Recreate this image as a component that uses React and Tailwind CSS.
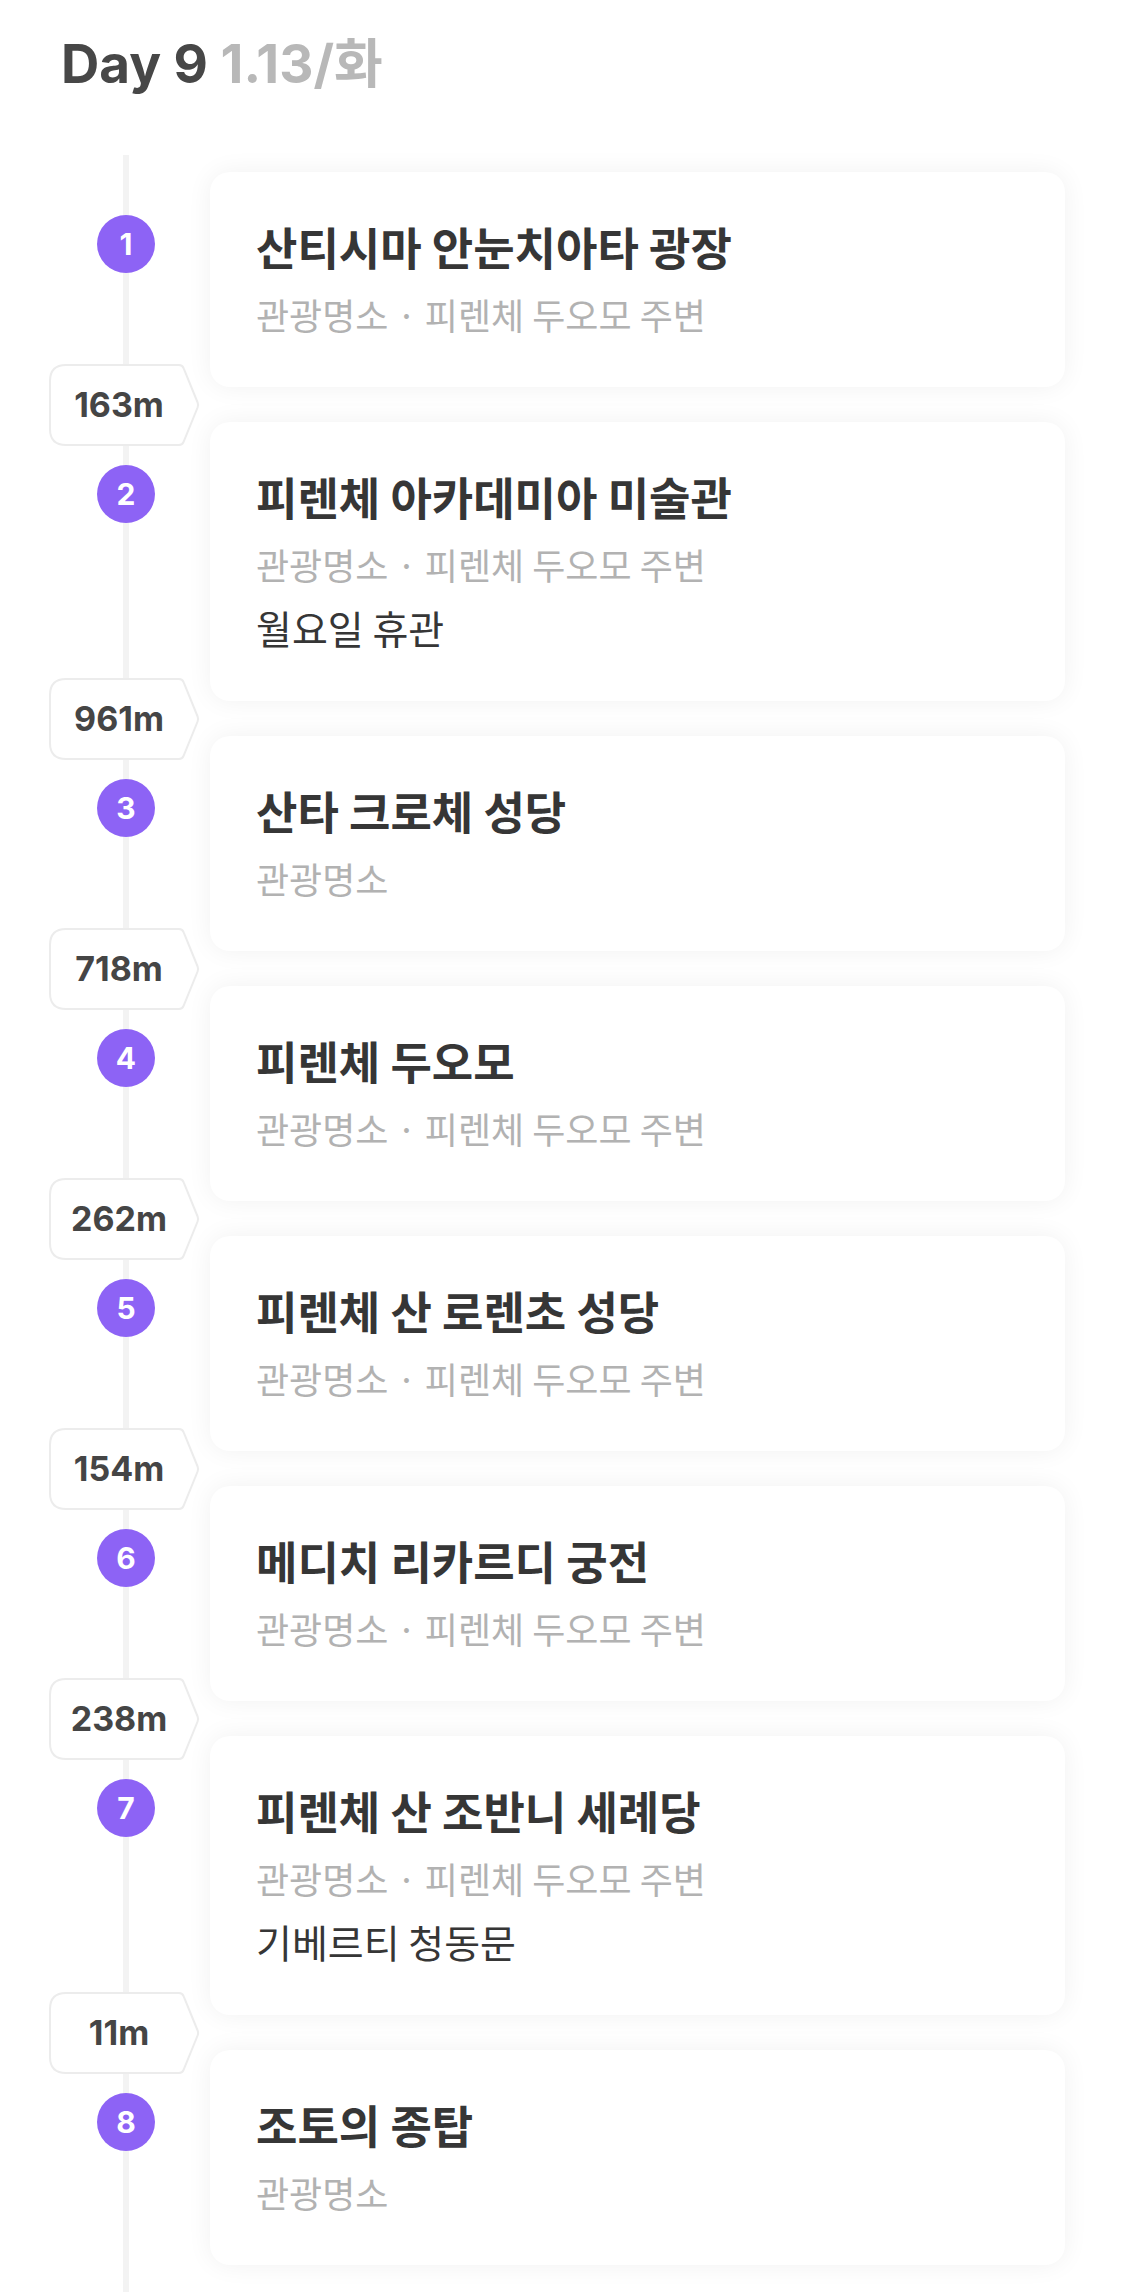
import React from "react";

const NEAR = "관광명소 · 피렌체 두오모 주변";

const stops = [
  { name: "산티시마 안눈치아타 광장", sub: NEAR, dist: "163m" },
  { name: "피렌체 아카데미아 미술관", sub: NEAR, note: "월요일 휴관", dist: "961m" },
  { name: "산타 크로체 성당", sub: "관광명소", dist: "718m" },
  { name: "피렌체 두오모", sub: NEAR, dist: "262m" },
  { name: "피렌체 산 로렌초 성당", sub: NEAR, dist: "154m" },
  { name: "메디치 리카르디 궁전", sub: NEAR, dist: "238m" },
  { name: "피렌체 산 조반니 세례당", sub: NEAR, note: "기베르티 청동문", dist: "11m" },
  { name: "조토의 종탑", sub: "관광명소" },
];

const latin = { fontFamily: 'Inter, "Noto Sans CJK KR", sans-serif' };
const kr = { fontFamily: '"Noto Sans CJK KR", Inter, sans-serif' };

function DistanceBadge({ value }) {
  return (
    <div className="relative z-10 ml-[49px] h-[82px] w-[151px] shrink-0">
      <svg className="absolute inset-0" width="151" height="82" viewBox="0 0 151 82">
        <path
          d="M17 1 H130 Q133.5 1 134.7 4.3 L148.6 38.5 Q149.6 41 148.6 43.5 L134.7 77.7 Q133.5 81 130 81 H17 Q1 81 1 65 V17 Q1 1 17 1 Z"
          fill="#ffffff"
          stroke="#ececec"
          strokeWidth="2"
        />
      </svg>
      <div
        className="relative flex h-full items-center justify-center pr-[11px] text-[34px] font-bold text-[#454545]"
        style={latin}
      >
        {value}
      </div>
    </div>
  );
}

function StopRow({ index, stop }) {
  return (
    <div className="flex">
      <div className="w-[210px] shrink-0 pl-[97px]">
        <div
          className="relative z-10 mt-[43px] flex h-[58px] w-[58px] items-center justify-center rounded-full bg-[#8d63f5] text-[30px] font-bold text-white"
          style={latin}
        >
          {index}
        </div>
      </div>
      <div className="mr-[60px] flex-1 rounded-[20px] bg-white pl-[46px] pt-[47px] pb-[49px] shadow-[0_0_26px_rgba(0,0,0,0.06)]">
        <div className="text-[45px] font-bold leading-[56px] text-[#363636]" style={kr}>
          {stop.name}
        </div>
        <div className="mt-[15px] text-[36px] leading-[48px] text-[#b2b2b2]" style={kr}>
          {stop.sub}
        </div>
        {stop.note && (
          <div className="mt-[14px] text-[39px] leading-[50px] text-[#363636]" style={kr}>
            {stop.note}
          </div>
        )}
      </div>
    </div>
  );
}

export default function App() {
  return (
    <div className="min-h-screen bg-white">
      <header className="px-[61px] pt-8">
        <h1 className="text-[53px] font-bold leading-[64px]" style={latin}>
          <span className="text-[#474747]">Day 9</span>{" "}
          <span className="text-[#b8b8b8]">1.13/화</span>
        </h1>
      </header>

      <main className="relative mt-[59px] pt-[17px] pb-[40px]">
        <div className="absolute left-[123px] top-0 bottom-0 w-[6px] bg-[#f3f3f3]" />
        {stops.map((stop, i) => (
          <div key={stop.name}>
            <StopRow index={i + 1} stop={stop} />
            {stop.dist && (
              <div className="flex h-[35px] items-center">
                <DistanceBadge value={stop.dist} />
              </div>
            )}
          </div>
        ))}
      </main>
    </div>
  );
}
